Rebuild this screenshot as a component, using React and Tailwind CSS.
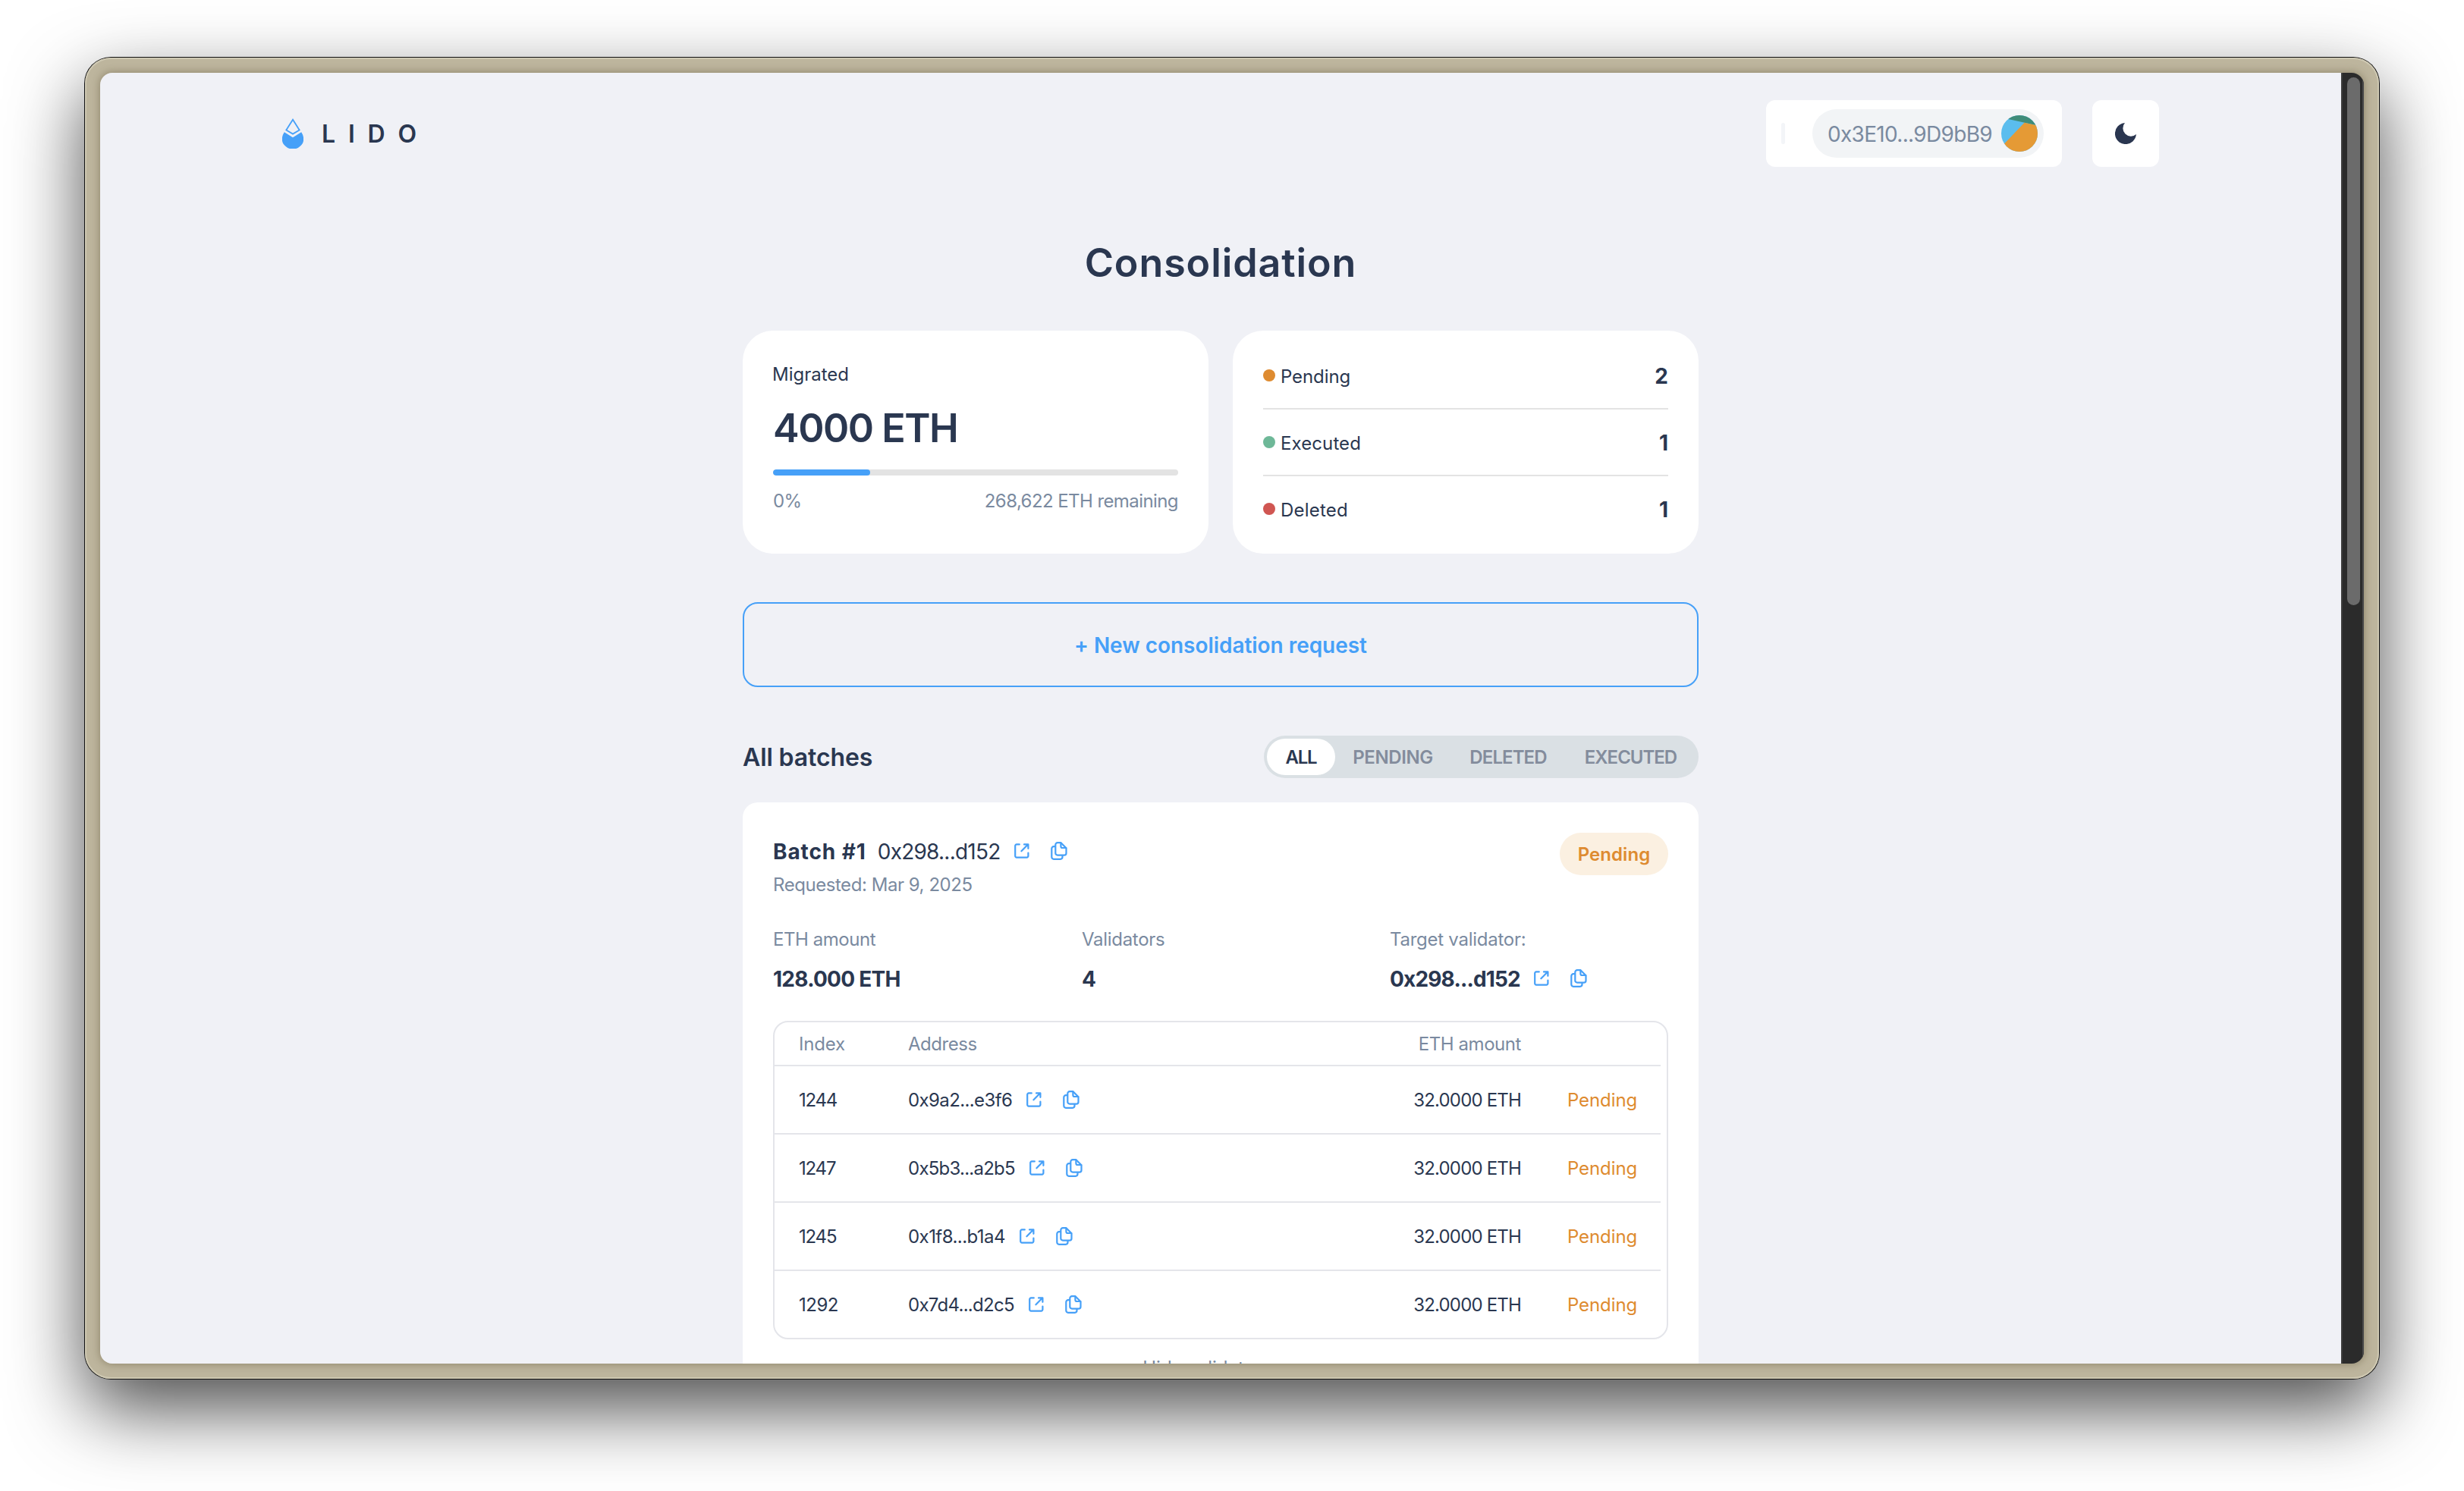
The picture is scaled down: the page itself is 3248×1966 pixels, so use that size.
/**
 * App.jsx — Lido consolidation dashboard.
 *
 * A framed browser window holding the header, the totals,
 * and the list of consolidation batches.
 */

import { useState } from 'react'

const STATUS_COUNTS = [
  { label: 'Pending', count: 2, dot: 'bg-[#de8b30]', tracking: 'tracking-[-0.1px]' },
  { label: 'Executed', count: 1, dot: 'bg-[#6eb898]', tracking: 'tracking-[0.1px]' },
  { label: 'Deleted', count: 1, dot: 'bg-[#d05652]', tracking: 'tracking-[0.2px]' },
]

const FILTERS = [
  { label: 'ALL', className: 'w-[90px] tracking-[-1.2px]' },
  { label: 'PENDING', className: 'w-[152px] tracking-[-0.4px]' },
  { label: 'DELETED', className: 'w-[152px] tracking-[-0.9px]' },
  { label: 'EXECUTED', className: 'w-[171px] tracking-[-1px]' },
]

const VALIDATORS = [
  { index: '1244', address: '0x9a2...e3f6', indexTracking: 'tracking-[-1.3px]', tracking: 'tracking-[-0.61px]' },
  { index: '1247', address: '0x5b3...a2b5', indexTracking: 'tracking-[-1.2px]', tracking: 'tracking-[-0.76px]' },
  { index: '1245', address: '0x1f8...b1a4', indexTracking: 'tracking-[-1.2px]', tracking: 'tracking-[-0.55px]' },
  { index: '1292', address: '0x7d4...d2c5', indexTracking: 'tracking-[-0.5px]', tracking: 'tracking-[-0.71px]' },
]

const MIGRATED_PERCENT = 24

export default function App() {
  return (
    <div className="h-[1966px] w-[3248px] overflow-hidden bg-white pl-[112px] pt-[76px] font-['Inter','Liberation_Sans',sans-serif] text-[#2a3750]">
      {/* Window frame */}
      <div className="h-[1742px] w-[3024px] rounded-[34px] bg-[#bdb59d] p-5 shadow-[inset_0_0_0_2px_#cec8b2,0_0_0_1px_#111111,0_40px_98px_rgba(0,0,0,0.7)]">
        <div className="h-full rounded-2xl shadow-[0_0_12px_rgba(60,50,20,0.4)]">
          <div className="flex h-full overflow-hidden rounded-2xl">
            <div className="h-full w-[2954px] overflow-hidden bg-[#f0f1f6]">
              <Header />
              <main className="mx-auto w-[1260px]">
                <h1 className="mt-[91px] text-center text-[52px] font-semibold leading-[72px] tracking-[0.9px]">
                  Consolidation
                </h1>
                <div className="mt-[53px] flex gap-8">
                  <MigratedCard />
                  <StatusCard />
                </div>
                <button className="mt-16 h-[112px] w-full rounded-[20px] border-2 border-[#46a0f8] pt-[2px] text-[28px] font-semibold tracking-[-0.04px] text-[#46a0f8]">
                  + New consolidation request
                </button>
                <BatchFilters />
                <BatchCard />
              </main>
            </div>
            <Scrollbar />
          </div>
        </div>
      </div>
    </div>
  )
}

function Header() {
  return (
    <header className="flex h-[124px] items-center px-[240px] pt-9">
      <LidoDrop />
      <span className="ml-6 pt-[2px] text-[32px] font-semibold leading-none tracking-[16.8px]">LIDO</span>

      <div className="ml-auto flex gap-10">
        <div className="flex h-[88px] w-[390px] items-center rounded-xl bg-white pl-5">
          <span className="h-7 w-[5px] rounded-sm bg-[#f3f5f8]" />
          <div className="ml-9 flex h-16 w-[305px] items-center justify-between rounded-full bg-[#f2f4f6] pl-5 pr-2">
            <span className="pt-[2px] text-[28px] tracking-[-0.68px] text-[#7a8aa0]">0x3E10...9D9bB9</span>
            <Avatar />
          </div>
        </div>
        <button className="flex size-[88px] items-center justify-center rounded-xl bg-white">
          <MoonIcon />
        </button>
      </div>
    </header>
  )
}

function MigratedCard() {
  return (
    <section className="h-[294px] w-[614px] rounded-[40px] bg-white p-10">
      <p className="-ml-px text-2xl leading-9">Migrated</p>
      <p className="mt-[21px] text-[52px] font-semibold leading-[64px] tracking-[-1.5px]">4000 ETH</p>
      <div className="mt-[22px] h-2 overflow-hidden rounded bg-[#e3e3e3]">
        <div className="h-full rounded bg-[#46a0f8]" style={{ width: `${MIGRATED_PERCENT}%` }} />
      </div>
      <div className="mt-4 flex justify-between text-2xl leading-9 text-[#7a8aa0]">
        <span className="tracking-[-0.6px]">0%</span>
        <span className="tracking-[-0.58px]">268,622 ETH remaining</span>
      </div>
    </section>
  )
}

function StatusCard() {
  return (
    <section className="h-[294px] w-[614px] divide-y-2 divide-[#e3e3e3] rounded-[40px] bg-white px-10 py-4">
      {STATUS_COUNTS.map(({ label, count, dot, tracking }) => (
        <div key={label} className="box-content flex h-[86px] items-center">
          <span className={`size-4 rounded-full ${dot}`} />
          <span className={`ml-[7px] pt-[3px] text-2xl leading-8 ${tracking}`}>{label}</span>
          <span className="ml-auto pt-[2px] text-[28px] font-bold leading-9">{count}</span>
        </div>
      ))}
    </section>
  )
}

function BatchFilters() {
  const [active, setActive] = useState('ALL')

  return (
    <div className="mt-16 flex h-14 items-center justify-between">
      <h2 className="pt-[2px] text-[32px] font-semibold tracking-[-0.12px]">All batches</h2>
      <div className="flex h-14 rounded-full bg-[#dae0e4] p-1">
        {FILTERS.map(({ label, className }) => (
          <button
            key={label}
            onClick={() => setActive(label)}
            className={`h-12 rounded-full pt-[2px] text-2xl font-semibold ${className} ${
              active === label ? 'bg-white text-[#2a3750]' : 'text-[#838c9c]'
            }`}
          >
            {label}
          </button>
        ))}
      </div>
    </div>
  )
}

function BatchCard() {
  return (
    <section className="mt-8 rounded-[20px] bg-white p-10">
      <div className="flex justify-between">
        <div>
          <div className="flex h-12 items-center text-[28px] leading-9">
            <span className="pt-[2px] font-bold tracking-[0.9px]">Batch #1</span>
            <span className="ml-[15px] pt-[2px] tracking-[-0.76px]">0x298...d152</span>
            <AddressActions />
          </div>
          <p className="pt-px text-2xl leading-10 tracking-[-0.45px] text-[#7a8aa0]">Requested: Mar 9, 2025</p>
        </div>
        <span className="flex h-14 w-[143px] items-center justify-center rounded-full bg-[#fbf0e1] pt-[2px] text-2xl font-semibold tracking-[0.08px] text-[#de8b30]">
          Pending
        </span>
      </div>

      {/* Batch summary */}
      <dl className="mt-8 flex">
        <SummaryItem label="ETH amount" labelTracking="tracking-[-0.44px]">
          <span className="pt-[2px] tracking-[-0.73px]">128.000 ETH</span>
        </SummaryItem>
        <SummaryItem label="Validators" labelTracking="tracking-[-0.3px]">
          <span className="pt-[2px]">4</span>
        </SummaryItem>
        <SummaryItem label="Target validator:" labelTracking="tracking-[-0.26px]">
          <span className="pt-[2px] tracking-[-0.84px]">0x298...d152</span>
          <AddressActions />
        </SummaryItem>
      </dl>

      {/* Validators table */}
      <div className="mt-8 rounded-[20px] border-2 border-[#e4e5ea] pr-2 text-2xl">
        <div className="grid h-14 grid-cols-[144px_1fr_200px_184px] items-center pl-8 pt-[2px] text-[#7a8aa0]">
          <span className="tracking-[-0.19px]">Index</span>
          <span className="tracking-[-0.46px]">Address</span>
          <span className="text-right tracking-[-0.44px]">ETH amount</span>
        </div>
        {VALIDATORS.map((validator) => (
          <div
            key={validator.index}
            className="box-content grid h-[88px] grid-cols-[144px_1fr_200px_184px] items-center border-t-2 border-[#e4e5ea] pl-8"
          >
            <span className={`pt-[2px] ${validator.indexTracking}`}>{validator.index}</span>
            <div className="flex items-center">
              <span className={`pr-px pt-[2px] ${validator.tracking}`}>{validator.address}</span>
              <AddressActions />
            </div>
            <span className="pt-[2px] text-right tracking-[-0.82px]">32.0000 ETH</span>
            <span className="pl-[61px] pt-[2px] tracking-[-0.1px] text-[#de8b30]">Pending</span>
          </div>
        ))}
      </div>

      <button className="mx-auto mt-[18px] flex items-center gap-3 text-2xl leading-10 text-[#7a8aa0]">
        Hide validators
        <ChevronUpIcon />
      </button>
    </section>
  )
}

function SummaryItem({ label, labelTracking, children }) {
  return (
    <div className="w-[407px] shrink-0 last:-ml-px last:w-auto">
      <dt className={`text-2xl leading-10 text-[#7a8aa0] ${labelTracking}`}>{label}</dt>
      <dd className="mt-[7px] flex h-12 items-center text-[28px] font-bold leading-9">{children}</dd>
    </div>
  )
}

function AddressActions() {
  return (
    <span className="ml-[18px] flex items-center gap-7 text-[#46a0f8]">
      <ExternalLinkIcon />
      <CopyIcon />
    </span>
  )
}

function Scrollbar() {
  return (
    <div className="h-full w-[30px] border-l-2 border-r-2 border-l-[#3c3c3c] border-r-[#4a4a4a] bg-[#2b2b2b] pl-[6px] pt-[6px]">
      <div className="h-[696px] w-[17px] rounded-full bg-[#6b6b6b]" />
    </div>
  )
}

function LidoDrop() {
  return (
    <svg width="28" height="40" viewBox="0 0 28 40" fill="none">
      <path d="M14 1.7 5.3 15.4 14 20.6l8.7-5.2L14 1.7Z" stroke="#46a0f8" strokeWidth="1.8" />
      <path
        d="M2.8 18.3 14 25.2l11.2-6.9.3.5C29.8 25.6 28.8 32.4 24 36.5a14.2 14.2 0 0 1-20 0C-.8 32.4-1.8 25.6 2.5 18.8l.3-.5Z"
        fill="#46a0f8"
      />
    </svg>
  )
}

function Avatar() {
  return (
    <svg width="48" height="48" viewBox="0 0 48 48">
      <clipPath id="avatar">
        <circle cx="24" cy="24" r="24" />
      </clipPath>
      <g clipPath="url(#avatar)">
        <rect width="48" height="48" fill="#5bbdee" />
        <path d="M0 2.9 48 13.6V0H0Z" fill="#3f8c79" />
        <path d="M30.5 9.7 48 13.6V48H-6Z" fill="#e59a35" />
      </g>
    </svg>
  )
}

function MoonIcon() {
  return (
    <svg width="28" height="28" viewBox="0 0 28 28" fill="#2a3650">
      <path d="M13 .1A14 14 0 1 0 27.9 15.1 10.6 10.6 0 0 1 13 .1Z" />
    </svg>
  )
}

function ExternalLinkIcon() {
  return (
    <svg width="20" height="20" viewBox="0 0 20 20" fill="none" stroke="currentColor" strokeWidth="2.2" strokeLinecap="round" strokeLinejoin="round">
      <path d="M6.8 1.4H3a1.8 1.8 0 0 0-1.8 1.8v13.6A1.8 1.8 0 0 0 3 18.6h13.6a1.8 1.8 0 0 0 1.8-1.8v-4.3" />
      <path d="M9.4 10.3 18 1.6M13 1.4h5.4v5.4" />
    </svg>
  )
}

function CopyIcon() {
  return (
    <svg width="22" height="24" viewBox="0 0 22 24" fill="none" stroke="currentColor" strokeWidth="2.2" strokeLinecap="round" strokeLinejoin="round">
      <path d="M13.5 1.2H9A2.7 2.7 0 0 0 6.3 3.9v11A2.7 2.7 0 0 0 9 17.6h8.8a2.7 2.7 0 0 0 2.7-2.7V8.2Z" />
      <path d="M13.4 1.6V6a2 2 0 0 0 2 2h4.800" />
      <path d="M5.8 6.2H4a2.7 2.7 0 0 0-2.7 2.7v11.2A2.7 2.7 0 0 0 4 22.8h8.8a2.7 2.7 0 0 0 2.7-2.7v-2" />
    </svg>
  )
}

function ChevronUpIcon() {
  return (
    <svg width="24" height="24" viewBox="0 0 24 24" fill="none" stroke="currentColor" strokeWidth="2.2" strokeLinecap="round" strokeLinejoin="round">
      <path d="m6 15 6-6 6 6" />
    </svg>
  )
}
